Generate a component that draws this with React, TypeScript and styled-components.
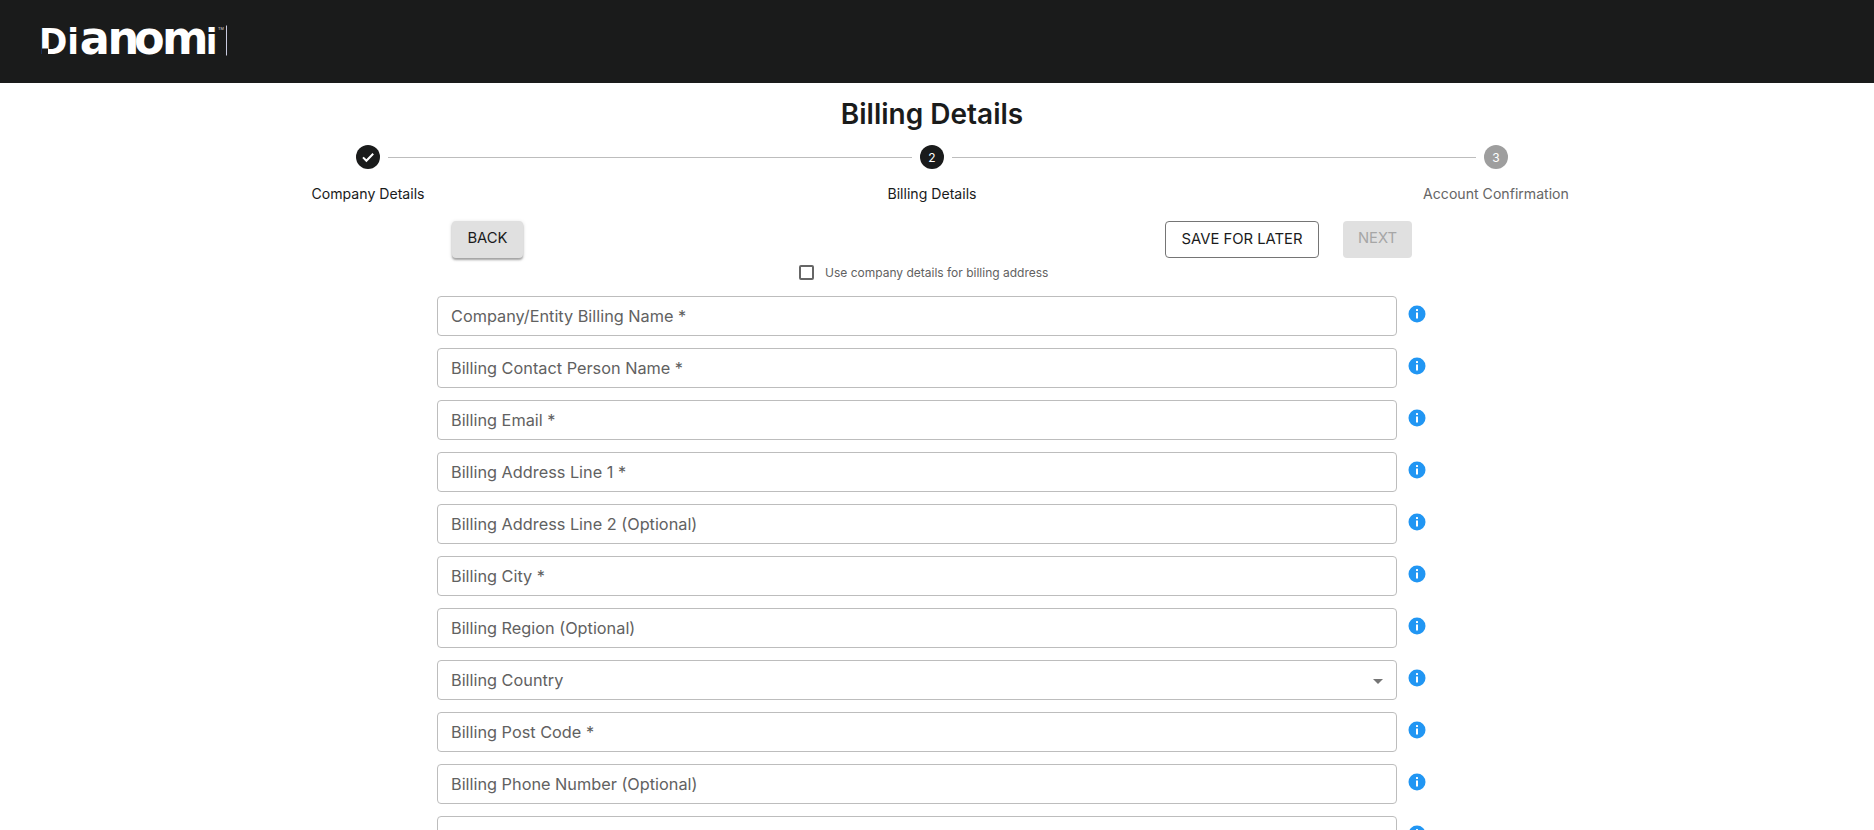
import React from 'react';
import styled, { createGlobalStyle } from 'styled-components';

const GlobalStyle = createGlobalStyle`
  html, body {
    margin: 0;
    padding: 0;
    height: 100%;
    overflow: hidden;
    background: #fff;
  }
  * {
    box-sizing: border-box;
  }
`;

const fontStack = `Inter, 'Noto Sans', sans-serif`;

const Page = styled.div`
  height: 830px;
  overflow: hidden;
  font-family: ${fontStack};
`;

const Header = styled.header`
  height: 83px;
  background: #1a1b1b;
  display: flex;
  align-items: center;
  padding: 0 0 0 41px;
`;

const Logo = styled.svg`
  display: block;
  width: 190px;
  height: 40px;
  overflow: visible;
`;

const Main = styled.main`
  width: 1264px;
  margin: 0 0 0 300px;
  display: flex;
  flex-direction: column;
`;

const Title = styled.h1`
  margin: 0;
  height: 62px;
  line-height: 62px;
  text-align: center;
  font-size: 28px;
  font-weight: 600;
  color: #1a1b1b;
`;

const Stepper = styled.div`
  display: grid;
  grid-template-columns: repeat(3, 136px);
  justify-content: space-between;
  height: 76px;
`;

const Step = styled.div`
  position: relative;
  display: flex;
  flex-direction: column;
  align-items: center;
`;

const Connector = styled.span`
  position: absolute;
  top: 12px;
  left: 88px;
  width: 524px;
  height: 1px;
  background: #bdbdbd;
`;

const StepCircle = styled.span<{ $pending?: boolean }>`
  width: 24px;
  height: 24px;
  border-radius: 50%;
  display: flex;
  align-items: center;
  justify-content: center;
  font-size: 12px;
  color: #fff;
  background: ${p => (p.$pending ? '#9e9e9e' : '#1a1b1b')};
`;

const StepLabel = styled.span<{ $pending?: boolean }>`
  margin-top: 16px;
  font-size: 14.1px;
  line-height: 17px;
  white-space: nowrap;
  color: ${p => (p.$pending ? '#666' : '#1a1b1b')};
`;

const Actions = styled.div`
  width: 960px;
  margin-left: 152px;
  display: flex;
  align-items: center;
  height: 37px;
`;

const Button = styled.button`
  height: 37px;
  border-radius: 4px;
  font-family: inherit;
  font-size: 14.8px;
  line-height: 34px;
  padding: 0 0 3px;
  color: #1a1b1b;
`;

const BackButton = styled(Button)`
  width: 71px;
  background: #e0e0e0;
  border: none;
  box-shadow: 0 2px 2px rgba(0, 0, 0, 0.3), 0 1px 4px rgba(0, 0, 0, 0.14);
`;

const SaveButton = styled(Button)`
  width: 154px;
  margin-left: auto;
  background: #fff;
  border: 1px solid #757575;
`;

const NextButton = styled(Button)`
  width: 69px;
  margin-left: 24px;
  background: #e0e0e0;
  border: none;
  color: #a6a6a6;
`;

const CheckRow = styled.label`
  height: 38px;
  padding-top: 7px;
  margin-left: 499px;
  display: flex;
  align-items: flex-start;
  gap: 11px;
  font-size: 12px;
  line-height: 16px;
  color: #616161;
`;

const CheckBox = styled.span`
  width: 15px;
  height: 15px;
  border: 2px solid #666;
  border-radius: 2px;
`;

const Fields = styled.div`
  margin-left: 137px;
  display: flex;
  flex-direction: column;
  gap: 12px;
`;

const FieldRow = styled.div`
  display: flex;
  gap: 11px;
`;

const FieldBox = styled.div`
  position: relative;
  width: 960px;
  height: 40px;
  flex: none;
  padding: 0 13px;
  display: flex;
  align-items: center;
  background: #fff;
  border: 1px solid #bdbdbd;
  border-radius: 4px;
  font-size: 16.3px;
  color: #616161;
`;

const SelectCaret = styled.span`
  position: absolute;
  top: 18px;
  right: 13px;
  width: 0;
  height: 0;
  border-left: 5px solid transparent;
  border-right: 5px solid transparent;
  border-top: 5px solid #757575;
`;

const InfoIcon = styled.svg`
  width: 18px;
  height: 18px;
  flex: none;
  margin-top: 9px;
`;

const Info = () => (
  <InfoIcon viewBox="0 0 18 18">
    <circle cx="9" cy="9" r="8.5" fill="#2196f3" />
    <rect x="8" y="4" width="2" height="2" rx="0.5" fill="#fff" />
    <rect x="8" y="7.5" width="2" height="6" fill="#fff" />
  </InfoIcon>
);

const FIELDS: { label: string; select?: boolean }[] = [
  { label: 'Company/Entity Billing Name *' },
  { label: 'Billing Contact Person Name *' },
  { label: 'Billing Email *' },
  { label: 'Billing Address Line 1 *' },
  { label: 'Billing Address Line 2 (Optional)' },
  { label: 'Billing City *' },
  { label: 'Billing Region (Optional)' },
  { label: 'Billing Country', select: true },
  { label: 'Billing Post Code *' },
  { label: 'Billing Phone Number (Optional)' },
  { label: '' },
];

const App: React.FC = () => {
  return (
    <Page>
      <GlobalStyle />
      <Header>
        <Logo viewBox="0 0 190 40">
          <text
            transform="scale(0.95 1)"
            y="31.5"
            x="-2.1 27.7 40.8 70 98 127.5 173.5"
            fill="#fff"
            fontFamily="'DejaVu Sans', sans-serif"
            fontWeight="700"
            fontSize="47"
          >
            <tspan fontSize="36">Di</tspan>anom<tspan fontSize="36">i</tspan>
          </text>
          <rect x="1" y="26.5" width="6" height="6" fill="#1a1b1b" />
          <text x="177" y="8" fill="#ddd" fontFamily="'Liberation Sans', sans-serif" fontSize="4">
            TM
          </text>
          <rect x="185" y="3.5" width="1" height="30" fill="#c9cbe0" />
        </Logo>
      </Header>
      <Main>
        <Title>Billing Details</Title>
        <Stepper>
          <Step>
            <StepCircle>
              <svg width="18" height="18" viewBox="0 0 18 18" fill="none" stroke="#fff" strokeWidth="2">
                <path d="M4 9.4l3.4 3.4 6.8-7" />
              </svg>
            </StepCircle>
            <Connector />
            <StepLabel>Company Details</StepLabel>
          </Step>
          <Step>
            <StepCircle>2</StepCircle>
            <Connector />
            <StepLabel>Billing Details</StepLabel>
          </Step>
          <Step>
            <StepCircle $pending>3</StepCircle>
            <StepLabel $pending>Account Confirmation</StepLabel>
          </Step>
        </Stepper>
        <Actions>
          <BackButton>BACK</BackButton>
          <SaveButton>SAVE FOR LATER</SaveButton>
          <NextButton disabled>NEXT</NextButton>
        </Actions>
        <CheckRow>
          <CheckBox />
          Use company details for billing address
        </CheckRow>
        <Fields>
          {FIELDS.map(f => (
            <FieldRow key={f.label}>
              <FieldBox>
                {f.label}
                {f.select && <SelectCaret />}
              </FieldBox>
              <Info />
            </FieldRow>
          ))}
        </Fields>
      </Main>
    </Page>
  );
};

export default App;
